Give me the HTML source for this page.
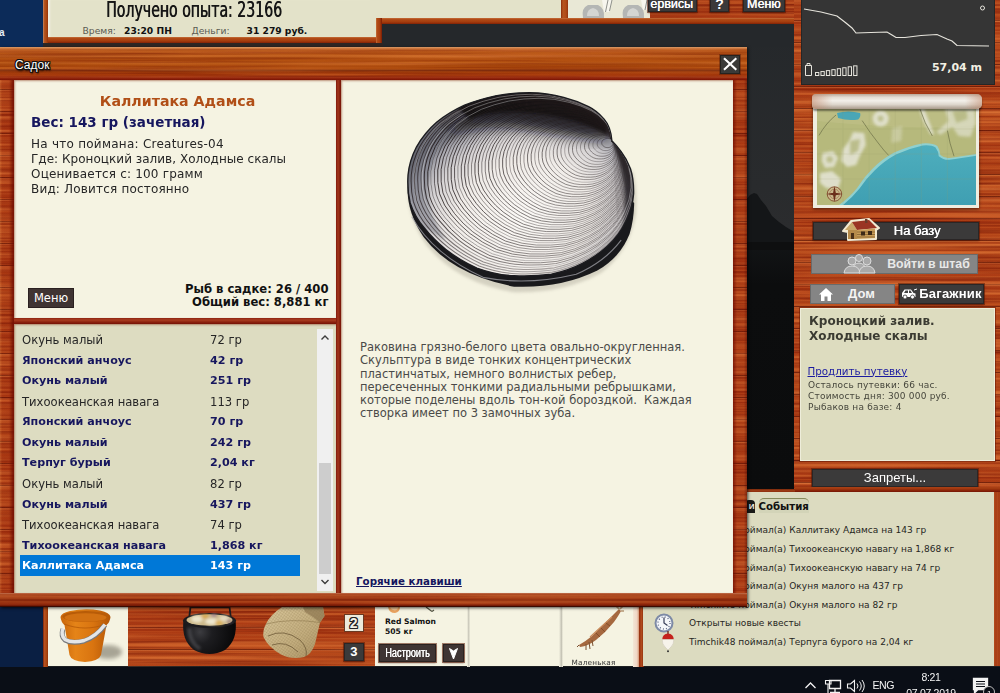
<!DOCTYPE html>
<html lang="ru">
<head>
<meta charset="utf-8">
<title>Садок</title>
<style>
*{box-sizing:border-box;margin:0;padding:0}
html,body{width:1000px;height:693px;overflow:hidden;background:#1c1c1c}
body{position:relative;font-family:"DejaVu Sans","Liberation Sans",sans-serif;font-size:11px;color:#222}
.abs{position:absolute}
.wood{background-color:#b24317;background-image:
 repeating-linear-gradient(180deg,rgba(60,5,0,0) 0,rgba(60,5,0,0) 19.5px,rgba(60,5,0,.5) 20.5px,rgba(255,180,120,.16) 21.5px,rgba(0,0,0,0) 22px),
 repeating-linear-gradient(180deg,rgba(255,170,90,.10) 0,rgba(120,10,0,.10) 2px,rgba(255,170,90,.06) 3.5px,rgba(120,10,0,.12) 5px,rgba(255,170,90,.10) 7px),
 repeating-linear-gradient(180deg,rgba(150,20,0,0) 0,rgba(150,20,0,.2) 22px,rgba(255,150,60,.12) 44px,rgba(150,20,0,0) 66px)}
.woodv{background-color:#ab4116;background-image:
 repeating-linear-gradient(90deg,rgba(255,170,90,.10) 0,rgba(120,10,0,.10) 2px,rgba(255,170,90,.06) 3.5px,rgba(120,10,0,.12) 5px,rgba(255,170,90,.10) 7px)}
.cream{background:#f5f3e2}
.olive{background:#dddcc1}
.panel{border:2px solid #7c1705;box-shadow:0 0 2px 1px rgba(90,10,0,.7)}
.btn{background:#3b3a3a;color:#fff;text-align:center;border:1px solid #2a2626;box-shadow:0 0 0 1px rgba(90,25,5,.55),0 1px 2px rgba(40,0,0,.5)}
.btng{background:#858585;color:#e8e8e8;text-align:center;border:1px solid #6a6a6a}
.b{font-weight:bold}
.navy{color:#16165e}
.row{position:absolute;left:22px;width:280px;height:20px;line-height:20px;font-size:11.6px;white-space:nowrap}
.row.b{font-size:11.15px}
.row span{position:absolute;left:188px}
.ev{position:absolute;left:689px;font-size:9px;color:#26261e;white-space:nowrap;letter-spacing:.02px}
</style>
</head>
<body>
<svg width="0" height="0" style="position:absolute"><defs>
<filter id="grain" x="0" y="0" width="100%" height="100%" color-interpolation-filters="sRGB"><feTurbulence type="fractalNoise" baseFrequency="0.004 0.35" numOctaves="3" seed="7"/><feColorMatrix type="matrix" values="0 0 0 0 0.38  0 0 0 0 0.03  0 0 0 0 0  1.2 0 0 0 -0.5"/></filter>
<filter id="grainl" x="0" y="0" width="100%" height="100%" color-interpolation-filters="sRGB"><feTurbulence type="fractalNoise" baseFrequency="0.003 0.22" numOctaves="2" seed="23"/><feColorMatrix type="matrix" values="0 0 0 0 1  0 0 0 0 0.6  0 0 0 0 0.3  0 1.2 0 0 -0.55"/></filter>
</defs></svg>

<!-- ===== background scene ===== -->
<div class="abs" style="left:0;top:0;width:1000px;height:667px;background:#1d1f21"></div>
<div class="abs" style="left:746px;top:24px;width:50px;height:466px;background:linear-gradient(180deg,#25282b 0,#292b2d 35%,#2b2c2e 44%,#131517 46%,#0c0d0e 56%,#0b0c0d 100%)"></div>
<svg class="abs" style="left:746px;top:180px" width="50" height="70" viewBox="0 0 50 70"><path d="M0 20 L4 15 L8 13 L11 14 L15 20 L20 26 L26 36 L33 42 L40 47 L50 53 L50 70 L0 70Z" fill="#141618"/><path d="M0 62 H50 V70 H0Z" fill="#0e0f10"/></svg>

<!-- ===== top-left ===== -->
<div class="abs" style="left:0;top:0;width:43px;height:47px;background:#0c2b59"></div>
<div class="abs" style="left:42.500px;top:0;width:5.500px;height:47px;background:linear-gradient(90deg,#c58a62 0,#b5551f 1.500px,#a9450f 3.500px,#8c2c0a 5.500px)"></div>
<div class="abs" style="left:48px;top:0;width:330px;height:37px;background:#e3e2c9;box-shadow:inset 3px 0 2px -1px #f1f0e2"></div>
<div class="abs" style="left:370px;top:0;width:192px;height:18px;background:#e3e2c9"></div>
<div class="abs" style="left:48px;top:36.500px;width:334px;height:6.500px;background:linear-gradient(180deg,#c46e3a 0,#b04a16 1.500px,#a53c0d 4px,#7a1c05 6.500px)"></div>
<div class="abs" style="left:376px;top:17.500px;width:424px;height:6.500px;background:linear-gradient(180deg,#c46e3a 0,#b04a16 1.500px,#a53c0d 4px,#7a1c05 6.500px)"></div>
<div class="abs" style="left:376px;top:17.500px;width:6px;height:25.500px;background:linear-gradient(90deg,#c46e3a 0,#b04a16 1.500px,#a53c0d 4px,#7a1c05 6px)"></div>
<div class="abs" style="left:382px;top:24px;width:412px;height:23px;background:#25282b"></div>
<div class="abs" style="left:43px;top:43px;width:340px;height:4px;background:#2e2624"></div>
<!-- top middle panels -->
<div class="abs" style="left:561px;top:0;width:7.500px;height:18px;background:linear-gradient(90deg,#8c2c0a 0,#b5551f 2px,#b04a16 5px,#8c2c0a 7.500px)"></div>
<div class="abs" style="left:568px;top:0;width:82px;height:18px;background:#e9e8d6"></div>
<svg class="abs" style="left:568px;top:0" width="82" height="18" viewBox="0 0 82 18">
 <defs><filter id="tb"><feGaussianBlur stdDeviation=".6"/></filter></defs>
 <g filter="url(#tb)">
  <path d="M15 18 Q13 8 20 5 L30 5 Q37 8 36 18Z" fill="#b4b6b4"/><path d="M19 16 Q19 9 25 8 Q31 9 31 16Z" fill="#d4d5d2"/>
  <path d="M55 18 Q53 8 60 5 L70 5 Q77 8 76 18Z" fill="#b4b6b4"/><path d="M59 16 Q59 9 65 8 Q71 9 71 16Z" fill="#d4d5d2"/>
  <path d="M34 0 L44 0 L41 12 L36 12Z M73 0 L82 0 L80 10 L75 10Z" fill="#f7f6ee"/>
  <path d="M40 0 L37.500 12 M44 0 L41.500 11 M79 0 L77 10" stroke="#8f918c" stroke-width="1" fill="none"/>
 </g>
</svg>
<div class="abs wood" style="left:650px;top:0;width:150px;height:18px"></div><svg class="abs" style="left:650px;top:0px" width="150" height="18"><rect width="150" height="18" filter="url(#grain)"/><rect width="150" height="18" filter="url(#grainl)"/></svg>
<div class="abs btn" style="left:648px;top:-6px;width:49px;height:17.500px;font-size:12.500px;line-height:18px;text-align:right;padding-right:3px;font-family:'Liberation Sans',sans-serif;text-shadow:.3px 0 0 #fff">ервисы</div>
<div class="abs btn b" style="left:710px;top:-6px;width:19px;height:18px;font-size:14px;line-height:19px;font-family:'Liberation Sans',sans-serif">?</div>
<div class="abs btn" style="left:742.500px;top:-6px;width:42.500px;height:18px;font-size:12.500px;line-height:18px;font-family:'Liberation Sans',sans-serif;text-shadow:.3px 0 0 #fff">Меню</div>
<div class="abs" style="left:794px;top:18px;width:7px;height:90px;background:linear-gradient(90deg,#8a2a08 0,#b24a16 2px,#b24815 7px)"></div>

<!-- top status texts -->
<div class="abs" style="left:106px;top:-3px;font-family:'DejaVu Sans Condensed','DejaVu Sans',sans-serif;font-size:14px;line-height:17px;color:#161616;white-space:nowrap;transform-origin:0 0;transform:scale(1.120,1.560);text-shadow:.45px 0 0 #161616">Получено опыта: 23166</div>
<div class="abs" style="left:82.500px;top:24.500px;font-size:9.200px;color:#5a5a52;white-space:nowrap">Время:</div>
<div class="abs b" style="left:124px;top:24.500px;font-size:9.200px;color:#111;white-space:nowrap">23:20 ПН</div>
<div class="abs" style="left:191.500px;top:24.500px;font-size:9.200px;color:#5a5a52;white-space:nowrap">Деньги:</div>
<div class="abs b" style="left:246.500px;top:24.500px;font-size:9.200px;color:#111;white-space:nowrap">31 279 руб.</div>
<div class="abs b" style="left:-1px;top:27px;font-size:10px;color:#e8eef6;font-family:'Liberation Sans',sans-serif">а</div>

<!-- ===== dialog window ===== -->
<div class="abs" id="dlg" style="left:0;top:0;width:0;height:0;z-index:10">
<div class="abs" style="left:0;top:47px;width:749px;height:560px;background:#000;opacity:.0"></div>
<div class="abs wood" style="left:0;top:47px;width:747px;height:559.500px;box-shadow:1px 1px 3px rgba(0,0,0,.7)"></div>
<svg class="abs" style="left:0;top:80px" width="747" height="514"><rect width="747" height="514" filter="url(#grain)"/><rect width="747" height="514" filter="url(#grainl)"/></svg>
<!-- title bar -->
<div class="abs" style="left:0;top:47px;width:747px;height:33px;background:linear-gradient(180deg,#dc9c6a 0,#c97238 1.500px,#b9571a 3px,#b75414 9px,#b3500f 16px,#ab480c 22px,#7e2a07 23.500px,#a9420d 25px,#a6390b 28px,#94220a 31px,#7c1505 33px)"></div>
<div class="abs" style="left:0;top:47px;width:747px;height:33px;opacity:.35;background:repeating-linear-gradient(180deg,rgba(255,200,140,.0) 0,rgba(255,200,140,.25) 2px,rgba(90,20,0,.2) 4px,rgba(255,200,140,0) 7px)"></div>
<svg class="abs" style="left:0;top:49px" width="747" height="29"><rect width="747" height="29" filter="url(#grain)" opacity=".8"/><rect width="747" height="29" filter="url(#grainl)" opacity=".8"/></svg>
<!-- bottom rail -->
<div class="abs" style="left:0;top:593px;width:747px;height:13.500px;background:linear-gradient(180deg,#c07050 0,#ad4a22 1.500px,#a84018 5px,#8a2a0c 7px,#a23a14 8.500px,#962c0e 11px,#6a1604 13px,#3a0a02 13.500px)"></div>
<svg class="abs" id="railgrain" style="left:0;top:595px" width="747" height="10"><rect width="747" height="10" filter="url(#grain)" opacity=".7"/><rect width="747" height="10" filter="url(#grainl)" opacity=".7"/></svg>
<!-- side rails shading -->
<div class="abs" style="left:0;top:80px;width:14px;height:513px;background:linear-gradient(90deg,rgba(255,170,100,.2) 0,rgba(140,20,0,.12) 2px,rgba(140,20,0,.2) 9px,rgba(110,10,0,.8) 13px)"></div>
<div class="abs" style="left:733px;top:80px;width:14px;height:513px;background:linear-gradient(90deg,rgba(110,10,0,.75) 0,rgba(140,20,0,.15) 4px,rgba(140,20,0,.15) 11px,rgba(60,0,0,.55) 15px)"></div>
<!-- dividers -->
<div class="abs" style="left:336px;top:80px;width:5px;height:513px;background:linear-gradient(90deg,#80180a 0,#a2361c 40%,#932a12 60%,#741206 100%)"></div>
<div class="abs" style="left:14px;top:318px;width:322px;height:6px;background:linear-gradient(180deg,#8e2410 0,#a83c20 35%,#8c220e 70%,#741206 100%)"></div>
<div class="abs" style="left:15px;top:58.300px;font-size:12px;font-family:'Liberation Sans',sans-serif;color:#fff;text-shadow:-1px -1px 0 #111,1px -1px 0 #111,-1px 1px 0 #111,1px 1px 0 #111,0 1px 0 #111,0 -1px 0 #111,1px 0 0 #111,-1px 0 0 #111,1px 2px 2px #000">Садок</div>
<div class="abs" style="left:720px;top:55px;width:20px;height:18.500px;background:#3a3a38;border:1px solid #252320;box-shadow:0 0 0 1px rgba(90,30,10,.5)"></div>
<svg class="abs" style="left:720px;top:54px" width="20" height="20" viewBox="0 0 20 20"><path d="M4 4.200 L16.300 15.800 M16.300 4.200 L4 15.800" stroke="#fff" stroke-width="2.100" fill="none"/></svg>

<!-- left top info panel -->
<div class="abs cream" style="left:14.400px;top:80.300px;width:321.600px;height:237.700px;box-shadow:inset 1px 1px 2px rgba(120,30,0,.45)"></div>
<div class="abs b" style="left:14px;top:92.600px;width:327px;text-align:center;font-size:14.200px;color:#b14f17;white-space:nowrap">Каллитака Адамса</div>
<div class="abs b navy" style="left:31px;top:114px;font-size:13.500px;white-space:nowrap">Вес: 143 гр (зачетная)</div>
<div class="abs" style="left:31px;top:136.500px;font-size:12px;line-height:15px;color:#262626;white-space:nowrap;letter-spacing:.18px"><span style="letter-spacing:.25px">На что поймана: Creatures-04</span><br><span style="letter-spacing:.03px">Где: Кроноцкий залив, Холодные скалы</span><br>Оценивается с: 100 грамм<br>Вид: Ловится постоянно</div>
<div class="abs b" style="left:128px;top:283.200px;width:200.500px;text-align:right;font-size:11.600px;line-height:13px;color:#111;white-space:nowrap">Рыб в садке: 26 / 400<br>Общий вес: 8,881 кг</div>
<div class="abs" style="left:28px;top:288px;width:46px;height:20px;font-size:11.500px;line-height:18px;background:#3f3433;color:#fff;text-align:center;border:1px solid #2a2020">Меню</div>

<!-- left list panel -->
<div class="abs olive" style="left:14.400px;top:324px;width:321.600px;height:269px;box-shadow:inset 1px 1px 2px rgba(120,30,0,.45)"></div>
<div class="abs" style="left:317px;top:329px;width:15.500px;height:262px;background:#f0f0f0"></div>
<div class="abs" style="left:318.500px;top:463px;width:12.500px;height:111px;background:#cdcdcd"></div>
<svg class="abs" style="left:317px;top:329px" width="16" height="262" viewBox="0 0 16 262"><path d="M4.500 10.500 L8 7 L11.500 10.500 M4.500 251 L8 254.500 L11.500 251" stroke="#3c3c3c" stroke-width="1.400" fill="none"/></svg>
<div class="abs" style="left:20px;top:555px;width:280px;height:20.500px;background:#0078d7"></div>
<div class="row" style="top:330px;color:#262626;">Окунь малый<span>72 гр</span></div>
<div class="row b navy" style="top:351px;">Японский анчоус<span>42 гр</span></div>
<div class="row b navy" style="top:371px;">Окунь малый<span>251 гр</span></div>
<div class="row" style="top:392px;color:#262626;">Тихоокеанская навага<span>113 гр</span></div>
<div class="row b navy" style="top:412px;">Японский анчоус<span>70 гр</span></div>
<div class="row b navy" style="top:433px;">Окунь малый<span>242 гр</span></div>
<div class="row b navy" style="top:453px;">Терпуг бурый<span>2,04 кг</span></div>
<div class="row" style="top:474px;color:#262626;">Окунь малый<span>82 гр</span></div>
<div class="row b navy" style="top:495px;">Окунь малый<span>437 гр</span></div>
<div class="row" style="top:515px;color:#262626;">Тихоокеанская навага<span>74 гр</span></div>
<div class="row b navy" style="top:536px;">Тихоокеанская навага<span>1,868 кг</span></div>
<div class="row b" style="top:556px;color:#fff;">Каллитака Адамса<span>143 гр</span></div>

<!-- right description panel -->
<div class="abs cream" style="left:341px;top:80px;width:392px;height:513px;box-shadow:inset 1px 1px 2px rgba(120,30,0,.45)"></div>
<!-- shell picture -->
<svg class="abs" style="left:390px;top:85px" width="270" height="215" viewBox="0 0 870 693">
 <defs>
  <path id="shl" d="M715 180 Q712 135 690 110 Q665 82 640 70 Q600 50 560 40 Q505 25 450 25 Q395 25 340 35 Q285 47 240 65 Q190 88 150 120 Q110 155 85 200 Q62 245 58 290 Q55 340 65 380 Q80 425 110 460 Q140 498 180 530 Q225 565 280 590 Q340 612 400 615 Q460 618 520 610 Q575 598 620 575 Q665 552 700 520 Q738 485 760 440 Q782 395 785 350 Q786 305 775 270 Q764 240 745 215 Q730 195 715 180Z" vector-effect="non-scaling-stroke"/>
  <clipPath id="shc"><use href="#shl"/></clipPath>
  <radialGradient id="shg" cx="430" cy="430" r="440" gradientUnits="userSpaceOnUse" gradientTransform="translate(430 430) rotate(-20) scale(1 .84) translate(-430 -430)">
   <stop offset="0" stop-color="#fbf9f6"/><stop offset=".5" stop-color="#f0ece8"/><stop offset=".72" stop-color="#d6d3d4"/><stop offset=".88" stop-color="#a6a6ae"/><stop offset="1" stop-color="#62626a"/>
  </radialGradient>
  <linearGradient id="shh" x1="330" y1="330" x2="400" y2="420" gradientUnits="userSpaceOnUse"><stop offset="0" stop-color="#fff" stop-opacity="0"/><stop offset=".5" stop-color="#fff" stop-opacity=".9"/><stop offset="1" stop-color="#fff" stop-opacity="0"/></linearGradient>
  <linearGradient id="shm" x1="250" y1="60" x2="560" y2="640" gradientUnits="userSpaceOnUse"><stop offset="0" stop-color="#fff" stop-opacity="1"/><stop offset=".45" stop-color="#fff" stop-opacity=".85"/><stop offset="1" stop-color="#fff" stop-opacity=".4"/></linearGradient>
  <mask id="shk" maskUnits="userSpaceOnUse" x="0" y="0" width="870" height="693"><rect width="870" height="693" fill="url(#shm)"/></mask>
  <filter id="shb" x="-5%" y="-5%" width="110%" height="110%"><feGaussianBlur stdDeviation="6"/></filter>
  <filter id="shb2" x="-20%" y="-20%" width="140%" height="140%"><feGaussianBlur stdDeviation="20"/></filter>
 </defs>
 <path d="M60 330 Q50 420 120 520 Q220 640 400 668 Q560 672 680 606 Q770 540 792 420 Q800 330 780 270 L700 500 L400 600 L120 450Z" fill="#b5b1a2" opacity=".5" filter="url(#shb)"/>
 <path d="M58 300 Q46 400 108 490 Q200 612 400 650 Q550 656 668 598 Q742 556 772 480 Q786 436 787 380 L700 300 L100 300Z" fill="#19191c"/>
 <path d="M70 425 Q140 548 300 620 Q440 648 600 610 Q690 572 745 500" fill="none" stroke="#a2a2a8" stroke-width="3.500" opacity=".75"/>
 <use href="#shl" fill="url(#shg)"/>
 <g clip-path="url(#shc)">
  <path d="M715 180 Q690 120 600 90 Q450 40 320 70 Q220 100 160 170 Q300 115 450 145 Q600 170 715 180Z" fill="#0e0e12" opacity=".8" filter="url(#shb2)"/>
  <path d="M700 125 Q600 30 420 15 Q300 18 215 70 L255 110 Q340 78 450 90 Q600 105 700 160Z" fill="#0a0a0e" opacity=".95" filter="url(#shb)"/>
  <path d="M715 180 Q790 260 790 350 Q785 440 740 500 Q765 400 755 320 Q745 240 715 180Z" fill="#2a2a30" opacity=".8" filter="url(#shb)"/>
  <path d="M58 290 Q62 245 85 200 Q110 155 150 120 L200 160 Q130 230 120 330 Q125 420 180 500 L110 460 Q55 380 58 290Z" fill="#70737f" opacity=".5" filter="url(#shb)"/>
  <g fill="none" stroke="#221a1b" mask="url(#shk)"><use href="#shl" transform="translate(679.4 171.0) scale(0.050)" stroke-opacity="0.95" stroke-width="0.57"/><use href="#shl" transform="translate(663.7 167.1) scale(0.072)" stroke-opacity="0.74" stroke-width="0.59"/><use href="#shl" transform="translate(648.5 163.3) scale(0.093)" stroke-opacity="0.56" stroke-width="0.60"/><use href="#shl" transform="translate(633.7 159.5) scale(0.114)" stroke-opacity="0.89" stroke-width="0.61"/><use href="#shl" transform="translate(619.2 155.9) scale(0.134)" stroke-opacity="0.92" stroke-width="0.62"/><use href="#shl" transform="translate(605.0 152.3) scale(0.154)" stroke-opacity="0.64" stroke-width="0.63"/><use href="#shl" transform="translate(590.9 148.8) scale(0.174)" stroke-opacity="0.67" stroke-width="0.64"/><use href="#shl" transform="translate(577.0 145.3) scale(0.193)" stroke-opacity="0.93" stroke-width="0.65"/><use href="#shl" transform="translate(563.3 141.8) scale(0.212)" stroke-opacity="0.87" stroke-width="0.66"/><use href="#shl" transform="translate(549.7 138.4) scale(0.231)" stroke-opacity="0.53" stroke-width="0.67"/><use href="#shl" transform="translate(536.3 135.0) scale(0.250)" stroke-opacity="0.76" stroke-width="0.67"/><use href="#shl" transform="translate(522.9 131.6) scale(0.269)" stroke-opacity="0.95" stroke-width="0.68"/><use href="#shl" transform="translate(509.7 128.3) scale(0.287)" stroke-opacity="0.80" stroke-width="0.69"/><use href="#shl" transform="translate(496.5 125.0) scale(0.306)" stroke-opacity="0.48" stroke-width="0.70"/><use href="#shl" transform="translate(483.4 121.7) scale(0.324)" stroke-opacity="0.84" stroke-width="0.71"/><use href="#shl" transform="translate(470.5 118.4) scale(0.342)" stroke-opacity="0.94" stroke-width="0.72"/><use href="#shl" transform="translate(457.6 115.2) scale(0.360)" stroke-opacity="0.72" stroke-width="0.73"/><use href="#shl" transform="translate(444.7 112.0) scale(0.378)" stroke-opacity="0.59" stroke-width="0.74"/><use href="#shl" transform="translate(431.9 108.7) scale(0.396)" stroke-opacity="0.90" stroke-width="0.75"/><use href="#shl" transform="translate(419.2 105.5) scale(0.414)" stroke-opacity="0.91" stroke-width="0.76"/><use href="#shl" transform="translate(406.6 102.4) scale(0.431)" stroke-opacity="0.61" stroke-width="0.77"/><use href="#shl" transform="translate(394.0 99.2) scale(0.449)" stroke-opacity="0.69" stroke-width="0.77"/><use href="#shl" transform="translate(381.5 96.0) scale(0.466)" stroke-opacity="0.94" stroke-width="0.78"/><use href="#shl" transform="translate(369.0 92.9) scale(0.484)" stroke-opacity="0.86" stroke-width="0.79"/><use href="#shl" transform="translate(356.6 89.8) scale(0.501)" stroke-opacity="0.50" stroke-width="0.80"/><use href="#shl" transform="translate(344.2 86.6) scale(0.519)" stroke-opacity="0.78" stroke-width="0.81"/><use href="#shl" transform="translate(331.8 83.5) scale(0.536)" stroke-opacity="0.95" stroke-width="0.82"/><use href="#shl" transform="translate(319.5 80.4) scale(0.553)" stroke-opacity="0.78" stroke-width="0.83"/><use href="#shl" transform="translate(307.3 77.4) scale(0.570)" stroke-opacity="0.51" stroke-width="0.84"/><use href="#shl" transform="translate(295.1 74.3) scale(0.587)" stroke-opacity="0.86" stroke-width="0.84"/><use href="#shl" transform="translate(282.9 71.2) scale(0.604)" stroke-opacity="0.94" stroke-width="0.85"/><use href="#shl" transform="translate(270.8 68.2) scale(0.621)" stroke-opacity="0.69" stroke-width="0.86"/><use href="#shl" transform="translate(258.7 65.1) scale(0.638)" stroke-opacity="0.62" stroke-width="0.87"/><use href="#shl" transform="translate(246.6 62.1) scale(0.655)" stroke-opacity="0.91" stroke-width="0.88"/><use href="#shl" transform="translate(234.6 59.1) scale(0.672)" stroke-opacity="0.90" stroke-width="0.89"/><use href="#shl" transform="translate(222.6 56.0) scale(0.689)" stroke-opacity="0.59" stroke-width="0.89"/><use href="#shl" transform="translate(210.6 53.0) scale(0.705)" stroke-opacity="0.72" stroke-width="0.90"/><use href="#shl" transform="translate(198.7 50.0) scale(0.722)" stroke-opacity="0.94" stroke-width="0.91"/><use href="#shl" transform="translate(186.8 47.0) scale(0.739)" stroke-opacity="0.84" stroke-width="0.92"/><use href="#shl" transform="translate(174.9 44.0) scale(0.755)" stroke-opacity="0.48" stroke-width="0.93"/><use href="#shl" transform="translate(163.1 41.1) scale(0.772)" stroke-opacity="0.80" stroke-width="0.94"/><use href="#shl" transform="translate(151.3 38.1) scale(0.788)" stroke-opacity="0.95" stroke-width="0.94"/><use href="#shl" transform="translate(139.5 35.1) scale(0.805)" stroke-opacity="0.76" stroke-width="0.95"/><use href="#shl" transform="translate(127.7 32.2) scale(0.821)" stroke-opacity="0.54" stroke-width="0.96"/><use href="#shl" transform="translate(116.0 29.2) scale(0.838)" stroke-opacity="0.87" stroke-width="0.97"/><use href="#shl" transform="translate(104.3 26.3) scale(0.854)" stroke-opacity="0.93" stroke-width="0.98"/><use href="#shl" transform="translate(92.6 23.3) scale(0.870)" stroke-opacity="0.66" stroke-width="0.99"/><use href="#shl" transform="translate(81.0 20.4) scale(0.887)" stroke-opacity="0.64" stroke-width="0.99"/><use href="#shl" transform="translate(69.3 17.5) scale(0.903)" stroke-opacity="0.92" stroke-width="1.00"/><use href="#shl" transform="translate(57.7 14.5) scale(0.919)" stroke-opacity="0.89" stroke-width="1.01"/><use href="#shl" transform="translate(46.1 11.6) scale(0.935)" stroke-opacity="0.56" stroke-width="1.02"/><use href="#shl" transform="translate(34.6 8.7) scale(0.952)" stroke-opacity="0.74" stroke-width="1.03"/><use href="#shl" transform="translate(23.0 5.8) scale(0.968)" stroke-opacity="0.95" stroke-width="1.03"/><use href="#shl" transform="translate(11.5 2.9) scale(0.984)" stroke-opacity="0.82" stroke-width="1.04"/></g>
  <g fill="none" stroke="#fff" stroke-opacity=".55" stroke-width=".6" clip-path="url(#shc)"><use href="#shl" transform="translate(21.4 5.4) scale(.97)"/><use href="#shl" transform="translate(50.1 12.6) scale(.93)"/><use href="#shl" transform="translate(82.2 20.7) scale(.885)"/></g>
  <path d="M715 180 Q500 300 250 560 L330 590 Q560 330 715 180Z" fill="url(#shh)" opacity=".5"/>
 </g>
 <use href="#shl" fill="none" stroke="#1c1c20" stroke-width="1.400"/>
</svg>
<div class="abs" style="left:360px;top:341px;width:340px;font-size:11.500px;line-height:13.300px;color:#4a4a48;white-space:nowrap">Раковина грязно-белого цвета овально-округленная.<br>Скульптура в виде тонких концентрических<br>пластинчатых, немного волнистых ребер,<br>пересеченных тонкими радиальными ребрышками,<br>которые поделены вдоль тон-кой бороздкой.&nbsp; Каждая<br>створка имеет по 3 замочных зуба.</div>
<div class="abs b navy" style="left:356px;top:575px;font-size:10.300px;text-decoration:underline;white-space:nowrap">Горячие клавиши</div>
</div>
<!-- ===== right sidebar ===== -->
<div class="abs wood" style="left:794px;top:0;width:206px;height:491px"></div><svg class="abs" style="left:794px;top:0px" width="206" height="491"><rect width="206" height="491" filter="url(#grain)"/><rect width="206" height="491" filter="url(#grainl)"/></svg>
<div class="abs" style="left:801px;top:0;width:194px;height:85px;background:#353535;border:1px solid #262626;border-top:none"></div>
<svg class="abs" style="left:801px;top:0" width="194" height="85" viewBox="0 0 194 85">
 <path d="M3 9 L20 12 L36 16 L45 23 L51 28 L55 33 L70 32.500 L86 32 L91 35 L95 37.500 L104 37.500 L120 35.500 L136 34.500 L146 39 L151 41 L156 45.500 L188 46" fill="none" stroke="#e6e4dc" stroke-width="1.200"/>
 <circle cx="181.500" cy="8" r="2" fill="none" stroke="#e6e4dc" stroke-width="1"/>
 <g fill="none" stroke="#e6e4dc" stroke-width="1">
  <path d="M4.500 65.500 h6 v10 h-6z M6 65.500 v-2 h3 v2"/>
  <rect x="14.50" y="72.50" width="3.300" height="3.00"/><rect x="19.95" y="71.55" width="3.300" height="3.95"/><rect x="25.40" y="70.60" width="3.300" height="4.90"/><rect x="30.85" y="69.65" width="3.300" height="5.85"/><rect x="36.30" y="68.70" width="3.300" height="6.80"/><rect x="41.75" y="67.75" width="3.300" height="7.75"/><rect x="47.20" y="66.80" width="3.300" height="8.70"/><rect x="52.65" y="65.85" width="3.300" height="9.65"/>
 </g>
</svg>
<div class="abs b" style="left:900px;top:61px;width:82px;text-align:right;font-size:11px;color:#f2efe2;white-space:nowrap">57,04 m</div>

<!-- map -->
<div class="abs" style="left:813px;top:100px;width:166px;height:108px;background:#efede0;box-shadow:0 1px 3px rgba(0,0,0,.55)"></div>
<svg class="abs" style="left:816.500px;top:104px" width="159.500" height="101" viewBox="85 95 795 505" preserveAspectRatio="none">
 <defs><filter id="mb" x="-10%" y="-10%" width="120%" height="120%"><feGaussianBlur stdDeviation="7"/></filter>
 <linearGradient id="sea" x1="0" y1="0" x2="0" y2="1"><stop offset="0" stop-color="#4eaebd"/><stop offset="1" stop-color="#3f9fb2"/></linearGradient></defs>
 <rect x="85" y="95" width="795" height="505" fill="#b6b97c"/>
 <path d="M85 95 H880 V200 Q600 230 85 180Z" fill="#bfc088" opacity=".6"/>
 <path d="M195 600 Q250 560 285 515 Q320 460 360 420 Q410 370 470 338 Q540 305 610 292 Q660 288 685 305 Q698 325 700 350 Q720 368 745 365 Q800 358 880 345 V600Z" fill="#8fd0d0"/>
 <path d="M215 600 Q262 562 297 518 Q332 466 372 428 Q420 380 478 348 Q545 316 612 302 Q655 298 676 312 Q690 330 692 356 Q716 376 745 374 Q800 366 880 353 V600Z" fill="url(#sea)"/>
 <path d="M185 140 Q240 125 300 140 Q305 160 290 172 Q240 180 190 165Z" fill="#4aa6b6"/>
 <g fill="#e6e6d8" filter="url(#mb)" opacity=".85">
  <circle cx="402" cy="168" r="40"/>
  <path d="M265 235 L320 240 L328 300 L300 350 L280 400 L235 410 L205 380 L215 320 L245 280Z"/>
  <path d="M112 340 L165 330 L190 365 L170 410 L125 415 L108 380Z"/>
  <path d="M100 440 L160 430 L205 470 L190 520 L130 515 L100 490Z"/>
  <path d="M595 110 L615 110 L650 200 L670 250 L650 245 L610 170Z"/>
  <path d="M720 110 L870 105 L875 190 L850 260 L790 255 L760 210 L700 250 L680 235 L740 180Z" opacity=".75"/>
  <path d="M460 215 L510 205 L505 280 L455 290Z" opacity=".45"/>
 </g>
 <g fill="#b2b57c" filter="url(#mb)" opacity=".8"><circle cx="402" cy="168" r="14"/><path d="M250 280 L300 270 L290 330 L250 350Z"/><circle cx="148" cy="372" r="16"/><path d="M760 130 L830 125 L835 170 L780 190Z"/></g>
 <g fill="none" stroke="#6d7048" stroke-width="3.500"><path d="M310 178 Q350 240 390 290 Q420 330 442 352"/><path d="M735 228 Q745 290 768 356"/><path d="M95 252 Q130 190 180 150"/><path d="M598 120 Q620 190 660 255"/></g>
 <g stroke="#9aa06a" stroke-width="1.500" opacity=".55"><path d="M85 220H880M85 345H880M85 470H880M215 95V600M345 95V600M475 95V600M605 95V600M735 95V600"/></g>
 <circle cx="172" cy="545" r="36" fill="#c9b98c" stroke="#7a3c22" stroke-width="4"/><circle cx="172" cy="545" r="24" fill="none" stroke="#8a4a2a" stroke-width="2"/>
 <path d="M172 505 L180 545 L172 585 L164 545Z M132 545 L172 537 L212 545 L172 553Z" fill="#6a2e1a"/>
</svg>
<div class="abs" style="left:811.500px;top:94px;width:170px;height:15px;border-radius:4px 5px 5px 4px;background:linear-gradient(180deg,#b9a898 0,#e4ddd4 22%,#f3f0ea 45%,#ddd6cc 70%,#a8998a 100%);box-shadow:0 2px 2px rgba(0,0,0,.45)"></div>
<div class="abs" style="left:811.500px;top:94px;width:170px;height:15px;border-radius:4px 5px 5px 4px;background:linear-gradient(90deg,rgba(190,130,100,.55) 0,rgba(190,130,100,0) 12%,rgba(190,130,100,0) 90%,rgba(190,130,100,.5) 100%)"></div>

<!-- sidebar buttons -->
<div class="abs btn" style="left:813px;top:221.500px;width:166px;height:18px;font-family:'Liberation Sans',sans-serif;font-size:13px;line-height:16px;padding-left:42px;text-shadow:.4px 0 0 #fff">На базу</div>
<svg class="abs" style="left:842px;top:217px" width="38" height="26" viewBox="0 0 38 26">
 <path d="M1 14 L9 4 L27 2 L37 11 L34 13 L34 22 L6 23 L6 15Z" fill="#f3ead2" stroke="#f3ead2" stroke-width="2" stroke-linejoin="round"/>
 <path d="M3 13 L10 5 L15 13Z" fill="#c9a86a"/><path d="M10 5 L27 3 L35 11 L15 13Z" fill="#9a3424"/>
 <path d="M6 13 L15 13 L15 22 L6 22Z" fill="#b58a4a"/><path d="M15 13 L33 11.500 L33 21 L15 22Z" fill="#c79c58"/>
 <path d="M15 15 H33 M15 17.500 H33 M15 20 H33" stroke="#7d5a2a" stroke-width=".7"/>
 <rect x="19" y="14.500" width="4" height="4" fill="#3c2a18"/><rect x="26" y="14" width="4" height="4" fill="#3c2a18"/><rect x="9" y="16" width="3" height="6" fill="#4a3018"/>
 <rect x="23" y="2" width="2.500" height="4" fill="#6a3a2a"/>
</svg>
<div class="abs btng b" style="left:811px;top:254px;width:167px;height:20px;font-family:'Liberation Sans',sans-serif;font-size:12.300px;line-height:18px;padding-left:68px;letter-spacing:0">Войти в штаб</div>
<svg class="abs" style="left:842px;top:252px" width="36" height="22" viewBox="0 0 36 22">
 <g fill="#a9a9a9" stroke="#dcdcdc" stroke-width="1"><circle cx="17" cy="6" r="3.500"/><path d="M10 19 Q11 11 17 11 Q23 11 24 19Z"/>
 <circle cx="10" cy="9" r="4"/><path d="M2 21 Q3 14 10 14 Q17 14 18 21Z"/><circle cx="25" cy="9" r="4"/><path d="M17 21 Q18 14 25 14 Q32 14 33 21Z"/></g>
</svg>
<div class="abs btng b" style="left:810px;top:284px;width:85px;height:20px;font-family:'Liberation Sans',sans-serif;font-size:13px;line-height:18px;padding-left:18px;color:#f4f4f4">Дом</div>
<svg class="abs" style="left:818px;top:287px" width="16" height="15" viewBox="0 0 16 15"><path d="M8 1 L15 7.500 L13 7.500 L13 14 L9.500 14 L9.500 9.500 L6.500 9.500 L6.500 14 L3 14 L3 7.500 L1 7.500Z" fill="#fff"/></svg>
<div class="abs btn b" style="left:899px;top:284px;width:85px;height:20px;font-family:'Liberation Sans',sans-serif;font-size:13px;line-height:18px;padding-left:18px;letter-spacing:.2px">Багажник</div>
<svg class="abs" style="left:901px;top:288px" width="16" height="12" viewBox="0 0 16 12"><path d="M1 5 L3.500 1.500 L10 1.500 L12.500 5 L14.500 5.500 L14.500 9 L1 9Z" fill="#fff"/><circle cx="4" cy="9" r="2" fill="#fff" stroke="#333" stroke-width=".8"/><circle cx="11.500" cy="9" r="2" fill="#fff" stroke="#333" stroke-width=".8"/><path d="M4.500 2.500 L3 5 L7 5 L7 2.500Z M8 2.500 L8 5 L11 5 L9.500 2.500Z" fill="#444"/><path d="M13 2 L16 1" stroke="#fff" stroke-width="1"/></svg>

<!-- location info -->
<div class="abs" style="left:800px;top:307.500px;width:195px;height:153px;background:#dddcbf;border:1px solid #eeedda;box-shadow:0 0 0 1px rgba(100,20,0,.55)"></div>
<div class="abs b" style="left:809px;top:314px;font-size:12px;line-height:15px;color:#3b3b32;white-space:nowrap">Кроноцкий залив.<br>Холодные скалы</div>
<div class="abs" style="left:807.500px;top:364.500px;font-size:10.300px;color:#1a1aa0;text-decoration:underline;white-space:nowrap">Продлить путевку</div>
<div class="abs" style="left:808px;top:380px;font-size:9px;line-height:11px;color:#46463c;white-space:nowrap;letter-spacing:.2px">Осталось путевки: 66 час.<br>Стоимость дня: 300 000 руб.<br>Рыбаков на базе: 4</div>
<div class="abs btn" style="left:812px;top:469px;width:166px;height:18px;font-family:'Liberation Sans',sans-serif;font-size:13px;line-height:16px">Запреты...</div>

<!-- ===== bottom strip ===== -->
<div class="abs" style="left:0;top:606px;width:43px;height:61px;background:#0a1f43"></div>
<div class="abs" style="left:42.500px;top:606px;width:5.500px;height:61px;background:linear-gradient(90deg,#7a2208 0,#b5501f 1.500px,#a9450f 3.500px,#8c2c0a 5.500px)"></div>
<div class="abs cream" style="left:48px;top:607px;width:80px;height:59px"></div>
<div class="abs wood" style="left:128px;top:607px;width:250px;height:59px"></div><svg class="abs" style="left:128px;top:607px" width="250" height="60"><rect width="250" height="60" filter="url(#grain)"/><rect width="250" height="60" filter="url(#grainl)"/></svg>
<div class="abs cream" style="left:375px;top:607px;width:92px;height:59px"></div>
<div class="abs" style="left:466.500px;top:607px;width:3.500px;height:60px;background:linear-gradient(90deg,#f5f3e2 0,#d2d0c2 45%,#c4c2b4 60%,#f5f3e2 100%)"></div>
<div class="abs cream" style="left:470px;top:607px;width:90px;height:59px"></div>
<div class="abs" style="left:558.500px;top:607px;width:4px;height:60px;background:linear-gradient(90deg,#f5f3e2 0,#d2d0c2 45%,#c4c2b4 60%,#f5f3e2 100%)"></div>
<div class="abs cream" style="left:563px;top:607px;width:71px;height:59px"></div>
<div class="abs" style="left:633px;top:607px;width:11px;height:60px;background:linear-gradient(90deg,#f3e6d6 0,#efd5c4 4px,#d9a588 5.500px,#9a3413 6.500px,#b04a1c 8.500px,#8e2c0c 10.500px)"></div>

<!-- events panel -->
<div class="abs" style="left:643px;top:490px;width:357px;height:176px;background:#dcdbc0"></div>
<div class="abs woodv" style="left:994px;top:490px;width:6px;height:176px"></div>
<div class="abs" style="left:746px;top:488.500px;width:50px;height:3.500px;background:linear-gradient(180deg,#7a2a0c 0,#9a3a14 1.500px,#8a2c0c 3.500px)"></div><div class="abs" style="left:795px;top:487px;width:205px;height:5px;background:linear-gradient(180deg,#ab4116 0,#a23a10 1.500px,#8a2408 3.500px,#741606 5px)"></div>

<!-- taskbar -->
<div class="abs" style="left:0;top:666.500px;width:1000px;height:27px;background:#0a0e16"></div>

<!-- events content -->
<div class="abs b" style="left:745px;top:500px;width:9.500px;height:12.500px;background:#1a1a18;border-radius:4px 4px 0 0;color:#f0f0e8;font-size:8px;line-height:13px;text-align:right;overflow:hidden;font-family:'Liberation Sans',sans-serif">И</div>
<div class="abs b" style="left:758.500px;top:498px;width:50px;height:14.500px;background:#d3d4b8;border-radius:5px 5px 0 0;border-top:1.500px solid #868a5c;font-size:10.200px;line-height:16px;text-align:center;color:#111">События</div>
<div class="ev" style="top:525.4px">Timchik48 поймал(а) Каллитаку Адамса на 143 гр</div>
<div class="ev" style="top:543.9px">Timchik48 поймал(а) Тихоокеанскую навагу на 1,868 кг</div>
<div class="ev" style="top:562.5px">Timchik48 поймал(а) Тихоокеанскую навагу на 74 гр</div>
<div class="ev" style="top:581.0px">Timchik48 поймал(а) Окуня малого на 437 гр</div>
<div class="ev" style="top:599.6px">Timchik48 поймал(а) Окуня малого на 82 гр</div>
<div class="ev" style="top:618.1px">Открыты новые квесты</div>
<div class="ev" style="top:636.7px">Timchik48 поймал(а) Терпуга бурого на 2,04 кг</div>

<svg class="abs" style="left:653.600px;top:612.500px" width="20" height="20" viewBox="0 0 20 20"><circle cx="10" cy="10" r="8.500" fill="#f4f6fa" stroke="#7d8aa6" stroke-width="2"/><circle cx="10" cy="10" r="6" fill="none" stroke="#55607e" stroke-width="1.400" stroke-dasharray=".9 2.240"/><path d="M10 4.500 V10 L13.500 12.500" stroke="#333a55" stroke-width="1.200" fill="none"/></svg>
<svg class="abs" style="left:660px;top:630.500px" width="16" height="22" viewBox="0 0 16 22"><path d="M8 0 V3" stroke="#6a2a22" stroke-width="1.400"/><path d="M2.200 8.500 Q2.500 3 8 2.500 Q13.500 3 13.800 8.500Z" fill="#c4221c"/><path d="M2.200 8.500 H13.800 Q14 13 11 16 Q9 18 8 19 Q7 18 5 16 Q2 13 2.200 8.500Z" fill="#f6f3ea" stroke="#cfcab8" stroke-width=".6"/><circle cx="8" cy="20.300" r="1" fill="#333"/></svg>

<!-- bottom items -->
<svg class="abs" style="left:48px;top:607px" width="80" height="60" viewBox="48 607 80 60">
 <defs><filter id="bk" x="-20%" y="-20%" width="140%" height="140%"><feGaussianBlur stdDeviation="2"/></filter>
 <linearGradient id="bg1" x1="0" y1="0" x2="1" y2="0"><stop offset="0" stop-color="#c9660a"/><stop offset=".3" stop-color="#e58418"/><stop offset=".65" stop-color="#d97410"/><stop offset="1" stop-color="#b35606"/></linearGradient></defs>
 <ellipse cx="108" cy="652" rx="14" ry="7" fill="#8e8a7c" opacity=".75" filter="url(#bk)"/>
 <path d="M60.500 617 Q61 613 70 611 Q85 608 100 610.500 Q110 612.500 110.500 617 Q110 622 106.500 625 L101 655 Q99 661 85 662 Q71 661 69.500 655 L64.500 625 Q61 622 60.500 617Z" fill="url(#bg1)"/>
 <ellipse cx="85.500" cy="616.500" rx="23" ry="5.500" fill="#b85c08"/>
 <ellipse cx="85.500" cy="617.500" rx="21" ry="4.300" fill="#d27112"/>
 <path d="M64 624 Q85 632 106.500 624" stroke="#b65a08" stroke-width="1.200" fill="none" opacity=".8"/>
 <path d="M63 629 Q60.500 636 65 640 Q72 644 84 641 Q96 637 105 625" fill="none" stroke="#77797c" stroke-width="5"/>
 <path d="M63 628.500 Q60.500 635.500 65 639.500 Q72 643.500 84 640.500 Q96 636.500 105 624.500" fill="none" stroke="#e4e5e6" stroke-width="3.400"/>
</svg>
<svg class="abs" style="left:176px;top:606px" width="160" height="61" viewBox="176 606 160 61">
 <defs><filter id="pb" x="-20%" y="-20%" width="140%" height="140%"><feGaussianBlur stdDeviation="1.600"/></filter>
 <radialGradient id="pg" cx="200" cy="632" r="34" gradientUnits="userSpaceOnUse"><stop offset="0" stop-color="#3c3c40"/><stop offset=".35" stop-color="#1d1d20"/><stop offset="1" stop-color="#09090a"/></radialGradient>
 <linearGradient id="sg" x1="0" y1="0" x2="1" y2="1"><stop offset="0" stop-color="#d9c79c"/><stop offset=".6" stop-color="#c3ad7e"/><stop offset="1" stop-color="#a89062"/></linearGradient>
 <pattern id="sp" width="2.400" height="2.400" patternUnits="userSpaceOnUse" patternTransform="rotate(35)"><rect width="2.400" height="2.400" fill="none"/><path d="M0 0 H2.400 M0 0 V2.400" stroke="#7d6840" stroke-width=".5" opacity=".55"/></pattern></defs>
 <path d="M190.500 607 L189 619 M229.500 607 L231 619" stroke="#1c1c1e" stroke-width="1.800"/>
 <path d="M190 607.500 H230" stroke="#2a1a12" stroke-width="1.400"/>
 <path d="M183.500 620 Q181 640 194 650 Q209.500 658 225 650 Q238 640 235.500 620Z" fill="url(#pg)"/>
 <ellipse cx="209.500" cy="620.500" rx="26.500" ry="7.500" fill="#1b1b1e"/>
 <ellipse cx="209.500" cy="620" rx="23" ry="5.800" fill="#cdb98a"/>
 <g filter="url(#pb)"><ellipse cx="197" cy="619" rx="6" ry="3.500" fill="#ece6cc"/><ellipse cx="212" cy="621.500" rx="7" ry="3.300" fill="#efe9d2"/><ellipse cx="224" cy="618.500" rx="5" ry="3" fill="#e6dcc0"/><ellipse cx="205" cy="616.500" rx="4" ry="2" fill="#d9a84e"/><ellipse cx="219" cy="622.500" rx="4" ry="2" fill="#dcae50"/><ellipse cx="214" cy="615.500" rx="3" ry="1.600" fill="#9c7a8c"/><ellipse cx="229" cy="621" rx="2.500" ry="1.500" fill="#8a6a7c"/></g>
 <path d="M189 628 Q189 642 200 649" stroke="#8a8a90" stroke-width="3.500" fill="none" opacity=".35" filter="url(#pb)"/>
 <path d="M282 607 L323 607 L324.500 616 L320 622.500 L315 644 Q311 655 304 657 Q292 660 281 654.500 Q268 647 263.500 637 Q262.500 630 266 624 Q270 615 282 607Z" fill="url(#sg)"/>
 <path d="M282 607 L323 607 L324.500 616 L320 622.500 L315 644 Q311 655 304 657 Q292 660 281 654.500 Q268 647 263.500 637 Q262.500 630 266 624 Q270 615 282 607Z" fill="url(#sp)"/>
 <path d="M303 607 L323 607 L324.500 616 L320 622.500 Q312 616 305 612Z" fill="#8d7650" opacity=".7"/>
 <path d="M268 636 Q284 628 300 640 Q308 648 306 656 M272 645 Q286 640 298 652" stroke="#6e5a38" stroke-width="1" fill="none" opacity=".8"/>
 <path d="M266 624 Q290 618 320 622.500" stroke="#8a744a" stroke-width=".8" fill="none" opacity=".7"/>
</svg>
<div class="abs b" style="left:344px;top:614px;width:19.500px;height:18px;background:#eceadb;border:1px solid #6a3a22;font-family:'Liberation Sans',sans-serif;font-size:14px;line-height:16px;text-align:center;color:#f4f2e6;text-shadow:-1px 0 0 #222,1px 0 0 #222,0 -1px 0 #222,0 1px 0 #222,-1px -1px 0 #222,1px 1px 0 #222,-1px 1px 0 #222,1px -1px 0 #222">2</div>
<div class="abs btn b" style="left:344px;top:642.500px;width:19.500px;height:18px;font-family:'Liberation Sans',sans-serif;font-size:13px;line-height:16px">3</div>
<svg class="abs" style="left:380px;top:607px" width="60" height="9" viewBox="0 0 60 9"><path d="M8 0 Q9 6 15 6 Q20 5 20 0Z" fill="#e9a25e"/><path d="M10 0 Q11 3 15 3.500 Q18 3 18 0Z" fill="#f3c796"/><path d="M46 0 L52 4.500 M52 4.500 L54 3" stroke="#554" stroke-width="1.200" fill="none"/></svg>
<div class="abs b" style="left:385px;top:616.500px;font-size:7.600px;line-height:10px;color:#111;white-space:nowrap;letter-spacing:0">Red Salmon<br>505 кг</div>
<div class="abs btn" style="left:378.500px;top:643.500px;width:57px;height:18.500px;background:#3f3534;border-color:#2a2220"></div>
<div class="abs" style="left:378.500px;top:643.500px;width:75px;height:18.500px;font-family:'Liberation Sans',sans-serif;font-size:12px;line-height:18px;color:#fff;text-align:center;transform-origin:0 0;transform:scaleX(.76);text-shadow:.4px 0 0 #fff">Настроить</div>
<div class="abs btn" style="left:442.500px;top:643.500px;width:21px;height:18.500px;background:#3f3534;border-color:#2a2220"></div>
<svg class="abs" style="left:442.500px;top:643.500px" width="21" height="18.500" viewBox="0 0 21 18.500"><path d="M6.500 4.500 L10.500 15 L14.500 4.500 L10.500 7Z" fill="#fff" stroke="#fff" stroke-width="1" stroke-linejoin="round"/></svg>
<svg class="abs" style="left:574px;top:606px" width="50" height="46" viewBox="0 0 50 46">
 <path d="M45 3 Q40 8 34 14 Q26 22 18 30 Q12 35 5 39 L6 41 Q14 40 22 34 Q32 26 40 16 Q45 9 47 5Z" fill="#a5683f"/>
 <path d="M45 3 L42 0 M46 3 L49 0 M47 5 L50 5" stroke="#b89a78" stroke-width="1.600"/>
 <path d="M38 11 Q28 20 16 31" stroke="#c98c5c" stroke-width="1.200" fill="none"/>
 <path d="M5 39 L3 41 M12 38 L12 44 M15 36 L16 43 M18 34 L19 40" stroke="#7a5030" stroke-width="1"/>
 <path d="M22 27 L26 31 M27 22 L31 26 M32 17 L36 20" stroke="#7e4724" stroke-width=".8"/>
</svg>
<div class="abs" style="left:558px;top:658px;width:71px;text-align:center;font-size:7.300px;color:#333;letter-spacing:.2px">Маленькая</div>

<!-- taskbar content -->
<svg class="abs" style="left:800px;top:668px" width="200" height="25" viewBox="0 0 200 25">
 <g fill="none" stroke="#f2f2f2" stroke-width="1.300">
  <path d="M5.500 20 L10.500 15 L15.500 20"/>
  <path d="M29.500 12.500 H40.500 V20.500 H29.500Z M35 20.500 V24 M30 24.500 H40"/><path d="M25.500 12.500 H31 V16 H25.500Z M28 16 V25" stroke-width="1.100"/>
  <path d="M47.500 16 H50.500 L54.500 12.500 V23.500 L50.500 20 H47.500Z" stroke-width="1.100"/><path d="M57 15.500 Q59 18 57 20.500 M59.500 13.500 Q63 18 59.500 22.500 M62 12 Q66.500 18 62 24" stroke-width="1"/>
  <path d="M173.500 10.500 H187.500 V21.500 H178 L174.500 25 L174.500 21.500 H173.500Z" fill="#f2f2f2"/>
 </g>
 <path d="M176 13.500 H185 M176 16 H185 M176 18.500 H185" stroke="#0a0e16" stroke-width="1"/>
 <circle cx="189" cy="24" r="5.500" fill="#0a0e16" stroke="#bbb" stroke-width="1"/>
 <text x="187" y="27.500" font-family="Liberation Sans, sans-serif" font-size="8" fill="#fff">1</text>
</svg>
<div class="abs" style="left:872.500px;top:678.500px;font-family:'Liberation Sans',sans-serif;font-size:10.600px;line-height:13px;color:#f4f4f4;letter-spacing:-.5px">ENG</div>
<div class="abs" style="left:900px;top:670.300px;width:62px;text-align:center;font-family:'Liberation Sans',sans-serif;font-size:10.500px;line-height:15.800px;color:#f4f4f4;letter-spacing:-.3px;white-space:nowrap">8:21<br>07.07.2019</div>

</body>
</html>
